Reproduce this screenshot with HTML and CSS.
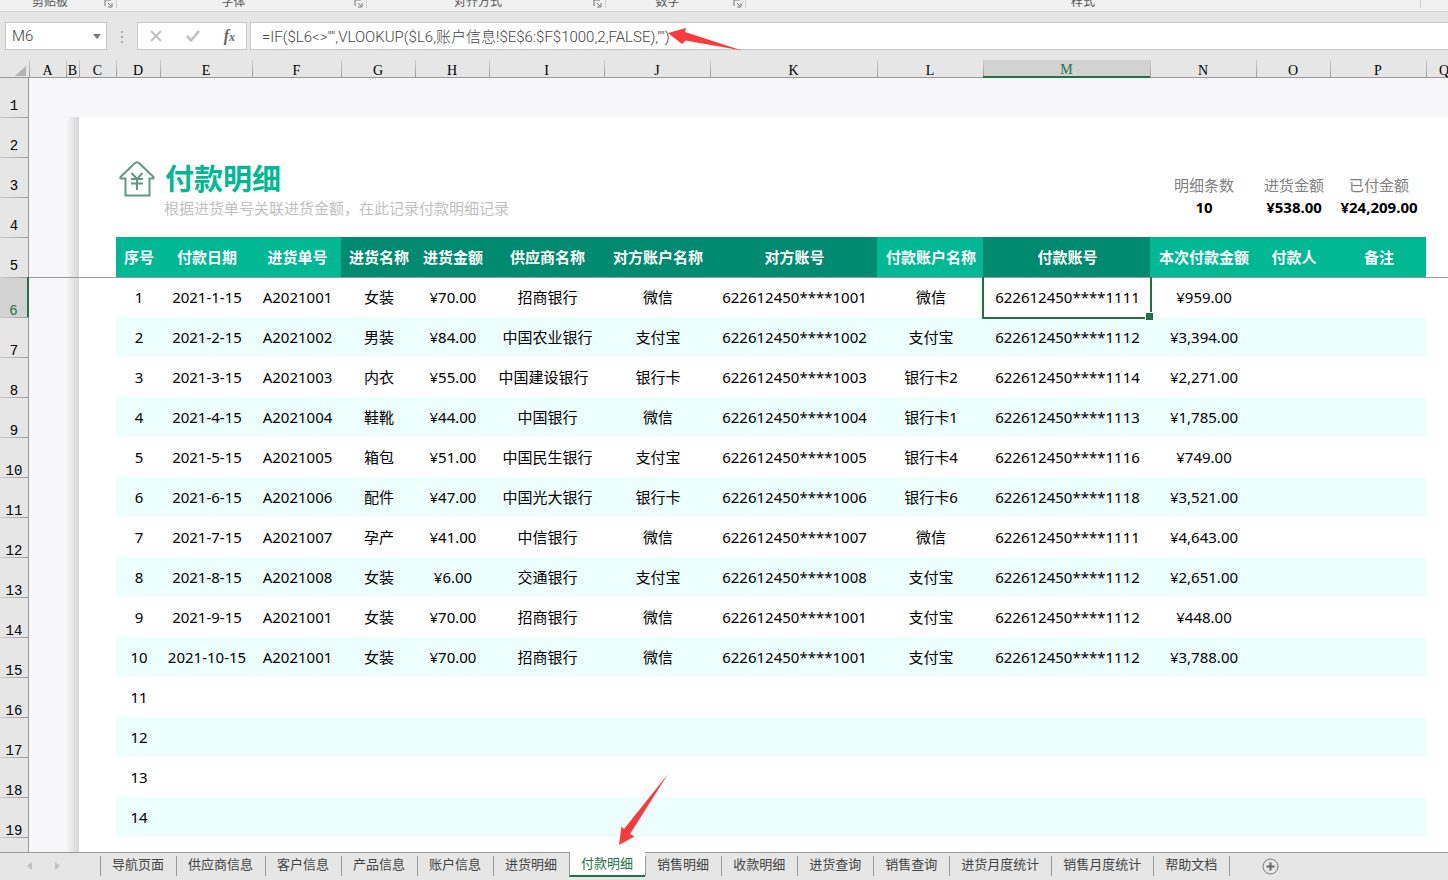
FILE: index.html
```html
<!DOCTYPE html>
<html lang="zh-CN">
<head>
<meta charset="utf-8">
<title>付款明细</title>
<link rel="stylesheet" href="styles.css">
</head>
<body>
<div class="app">
  <header class="ribbon">
    <div class="group g-clip"><span>剪贴板</span><button class="launch" aria-label="剪贴板设置"><svg width="9" height="9" viewBox="0 0 9 9"><path d="M1 7V1h6M4 4l3 3M8 4v4H4"/></svg></button></div>
    <div class="group g-font"><span>字体</span><button class="launch" aria-label="字体设置"><svg width="9" height="9" viewBox="0 0 9 9"><path d="M1 7V1h6M4 4l3 3M8 4v4H4"/></svg></button></div>
    <div class="group g-align"><span>对齐方式</span><button class="launch" aria-label="对齐设置"><svg width="9" height="9" viewBox="0 0 9 9"><path d="M1 7V1h6M4 4l3 3M8 4v4H4"/></svg></button></div>
    <div class="group g-num"><span>数字</span><button class="launch" aria-label="数字格式"><svg width="9" height="9" viewBox="0 0 9 9"><path d="M1 7V1h6M4 4l3 3M8 4v4H4"/></svg></button></div>
    <div class="group g-style"><span>样式</span></div>
  </header>

  <div class="formula-bar">
    <div class="name-box"><input type="text" value="M6" aria-label="名称框"><button aria-label="展开名称"><svg width="8" height="5" viewBox="0 0 8 5"><path d="M0 0h8L4 5z" fill="#777"/></svg></button></div>
    <svg class="dots" width="3" height="12" viewBox="0 0 3 12"><path d="M0 0h2v2H0zM0 5h2v2H0zM0 10h2v2H0z" fill="#ababab"/></svg>
    <div class="fx-tools">
      <button aria-label="取消"><svg width="12" height="12" viewBox="0 0 12 12"><path d="M1 1l10 10M11 1L1 11" stroke="#c0c0c0" stroke-width="2" fill="none"/></svg></button>
      <button aria-label="输入"><svg width="14" height="12" viewBox="0 0 14 12"><path d="M1 6l4 4.500L13 1" stroke="#c0c0c0" stroke-width="2.600" fill="none"/></svg></button>
      <button class="fx" aria-label="插入函数"><i>f<small>x</small></i></button>
    </div>
    <input class="formula" type="text" aria-label="编辑栏" value='=IF($L6&lt;&gt;"",VLOOKUP($L6,账户信息!$E$6:$F$1000,2,FALSE),"")'>
    <svg class="arrow-formula" width="76" height="26" viewBox="0 0 76 26"><path d="M1 7L19 2L18 6L75 24.500L18.500 14.500L15 18z" fill="#fb3b3b"/></svg>
  </div>

  <main class="sheet">
    <table class="grid">
      <colgroup><col class="w-row"><col class="w-a"><col class="w-b"><col class="w-a"><col class="w-d"><col class="w-e"><col class="w-f"><col class="w-g"><col class="w-g"><col class="w-i"><col class="w-j"><col class="w-k"><col class="w-j"><col class="w-k"><col class="w-j"><col class="w-g"><col class="w-p"><col></colgroup>
      <thead>
        <tr class="letters"><th class="corner"><svg width="11" height="10" viewBox="0 0 11 10"><path d="M11 0v10H0z" fill="#b4b4b4"/></svg></th><th>A</th><th>B</th><th>C</th><th>D</th><th>E</th><th>F</th><th>G</th><th>H</th><th>I</th><th>J</th><th>K</th><th>L</th><th class="on">M</th><th>N</th><th>O</th><th>P</th><th class="last">Q</th></tr>
      </thead>
      <tbody class="pane">
        <tr class="first"><th>1</th><td class="out" colspan="17"></td></tr>
        <tr><th>2</th><td class="out"></td><td class="edge"></td><td colspan="15"></td></tr>
        <tr class="bottom"><th>3</th><td class="out"></td><td class="edge"></td><td></td>
          <td class="logo"><svg width="36" height="37" viewBox="0 0 36 37"><path d="M6.500 35.500V18.500H2Q0.500 18 2 16.500L15.500 3.500Q18 1 20.500 3.500L34 16.500Q35.500 18 34 18.500H30.500V35.500Z"/><path d="M12.500 13l5.500 6l5.500-6M12 19h12M12 23.500h12M18 19v11"/></svg></td>
          <td class="title" colspan="9"><h1>付款明细</h1></td><td class="label">明细条数</td><td class="label">进货金额</td><td class="label">已付金额</td><td></td></tr>
        <tr class="top"><th>4</th><td class="out"></td><td class="edge"></td><td></td><td></td><td class="note" colspan="9">根据进货单号关联进货金额，在此记录付款明细记录</td><td class="total">10</td><td class="total">¥538.00</td><td class="total">¥24,209.00</td><td></td></tr>
        <tr class="fields"><th>5</th><td class="out"></td><td class="edge"></td><td></td><td class="h">序号</td><td class="h">付款日期</td><td class="h">进货单号</td><td class="h dark">进货名称</td><td class="h dark">进货金额</td><td class="h dark">供应商名称</td><td class="h dark">对方账户名称</td><td class="h dark">对方账号</td><td class="h">付款账户名称</td><td class="h dark">付款账号</td><td class="h">本次付款金额</td><td class="h">付款人</td><td class="h">备注</td><td></td></tr>
      </tbody>
      <tbody>
        <tr class="frozen"><th class="on">6</th><td class="out"></td><td class="edge"></td><td></td><td>1</td><td>2021-1-15</td><td>A2021001</td><td>女装</td><td>¥70.00</td><td>招商银行</td><td>微信</td><td>622612450****1001</td><td>微信</td><td class="active">622612450****1111<span class="cursor"></span></td><td>¥959.00</td><td></td><td></td><td></td></tr>
        <tr class="alt"><th>7</th><td class="out"></td><td class="edge"></td><td></td><td>2</td><td>2021-2-15</td><td>A2021002</td><td>男装</td><td>¥84.00</td><td>中国农业银行</td><td>支付宝</td><td>622612450****1002</td><td>支付宝</td><td>622612450****1112</td><td>¥3,394.00</td><td></td><td></td><td></td></tr>
        <tr><th>8</th><td class="out"></td><td class="edge"></td><td></td><td>3</td><td>2021-3-15</td><td>A2021003</td><td>内衣</td><td>¥55.00</td><td class="trail">中国建设银行</td><td>银行卡</td><td>622612450****1003</td><td>银行卡2</td><td>622612450****1114</td><td>¥2,271.00</td><td></td><td></td><td></td></tr>
        <tr class="alt"><th>9</th><td class="out"></td><td class="edge"></td><td></td><td>4</td><td>2021-4-15</td><td>A2021004</td><td>鞋靴</td><td>¥44.00</td><td>中国银行</td><td>微信</td><td>622612450****1004</td><td>银行卡1</td><td>622612450****1113</td><td>¥1,785.00</td><td></td><td></td><td></td></tr>
        <tr><th>10</th><td class="out"></td><td class="edge"></td><td></td><td>5</td><td>2021-5-15</td><td>A2021005</td><td>箱包</td><td>¥51.00</td><td>中国民生银行</td><td>支付宝</td><td>622612450****1005</td><td>银行卡4</td><td>622612450****1116</td><td>¥749.00</td><td></td><td></td><td></td></tr>
        <tr class="alt"><th>11</th><td class="out"></td><td class="edge"></td><td></td><td>6</td><td>2021-6-15</td><td>A2021006</td><td>配件</td><td>¥47.00</td><td>中国光大银行</td><td>银行卡</td><td>622612450****1006</td><td>银行卡6</td><td>622612450****1118</td><td>¥3,521.00</td><td></td><td></td><td></td></tr>
        <tr><th>12</th><td class="out"></td><td class="edge"></td><td></td><td>7</td><td>2021-7-15</td><td>A2021007</td><td>孕产</td><td>¥41.00</td><td>中信银行</td><td>微信</td><td>622612450****1007</td><td>微信</td><td>622612450****1111</td><td>¥4,643.00</td><td></td><td></td><td></td></tr>
        <tr class="alt"><th>13</th><td class="out"></td><td class="edge"></td><td></td><td>8</td><td>2021-8-15</td><td>A2021008</td><td>女装</td><td>¥6.00</td><td>交通银行</td><td>支付宝</td><td>622612450****1008</td><td>支付宝</td><td>622612450****1112</td><td>¥2,651.00</td><td></td><td></td><td></td></tr>
        <tr><th>14</th><td class="out"></td><td class="edge"></td><td></td><td>9</td><td>2021-9-15</td><td>A2021001</td><td>女装</td><td>¥70.00</td><td>招商银行</td><td>微信</td><td>622612450****1001</td><td>支付宝</td><td>622612450****1112</td><td>¥448.00</td><td></td><td></td><td></td></tr>
        <tr class="alt"><th>15</th><td class="out"></td><td class="edge"></td><td></td><td>10</td><td>2021-10-15</td><td>A2021001</td><td>女装</td><td>¥70.00</td><td>招商银行</td><td>微信</td><td>622612450****1001</td><td>支付宝</td><td>622612450****1112</td><td>¥3,788.00</td><td></td><td></td><td></td></tr>
        <tr><th>16</th><td class="out"></td><td class="edge"></td><td></td><td>11</td><td colspan="12"></td><td></td></tr>
        <tr class="alt"><th>17</th><td class="out"></td><td class="edge"></td><td></td><td>12</td><td colspan="12"></td><td></td></tr>
        <tr><th>18</th><td class="out"></td><td class="edge"></td><td></td><td>13</td><td colspan="12"></td><td></td></tr>
        <tr class="alt"><th>19</th><td class="out"></td><td class="edge"></td><td></td><td>14</td><td colspan="12"></td><td></td></tr>
        <tr><th></th><td class="out"></td><td class="edge"></td><td colspan="15"></td></tr>
      </tbody>
    </table>
  </main>

  <nav class="tabs">
    <div class="scroll">
      <button aria-label="向左滚动"><svg width="5" height="8" viewBox="0 0 5 8"><path d="M5 0v8L0 4z" fill="#c0c0c0"/></svg></button>
      <button aria-label="向右滚动"><svg width="5" height="8" viewBox="0 0 5 8"><path d="M0 0v8L5 4z" fill="#c0c0c0"/></svg></button>
    </div>
    <button class="tab">导航页面</button><button class="tab">供应商信息</button><button class="tab">客户信息</button><button class="tab">产品信息</button><button class="tab">账户信息</button><button class="tab">进货明细</button><button class="tab current">付款明细</button><button class="tab">销售明细</button><button class="tab">收款明细</button><button class="tab">进货查询</button><button class="tab">销售查询</button><button class="tab">进货月度统计</button><button class="tab">销售月度统计</button><button class="tab">帮助文档</button>
    <button class="add" aria-label="新工作表"><svg width="17" height="17" viewBox="0 0 17 17"><circle cx="8.500" cy="8.500" r="7.500" fill="none" stroke="#777"/><path d="M4.500 8.500h8M8.500 4.500v8" stroke="#666" stroke-width="2"/></svg></button>
    <svg class="arrow-tab" width="52" height="73" viewBox="0 0 52 73"><path d="M1 72L3.500 53.500L6 56L50 1L12 61L16.500 63.500z" fill="#fb3b3b"/></svg>
  </nav>
</div>
</body>
</html>
```

FILE: styles.css
```css
* { box-sizing: border-box; }
body {
  margin: 0;
  font-family: "Noto Sans", "Noto Sans CJK SC", sans-serif;
  font-size: 15px;
  color: #000;
}
button, input { font: inherit; color: inherit; border: 0; padding: 0; background: none; }
svg { display: block; }

.app { display: flex; flex-direction: column; height: 100vh; overflow: hidden; background: #e6e6e6; }

/* ribbon */
.ribbon {
  display: flex;
  flex: none;
  height: 12px;
  overflow: hidden;
  background: #f1f1f1;
  border-bottom: 1px solid #d4d4d4;
}
.group {
  display: flex;
  align-items: flex-end;
  height: 8px;
  padding-right: 3px;
  border-right: 1px solid #d0d0d0;
  font-size: 12px;
  line-height: 12px;
  color: #555;
}
.group span { flex: 1; text-align: center; }
.launch { padding-left: 4px; }
.launch svg { fill: none; stroke: #777; }
.g-clip { width: 117px; }
.g-font { width: 250px; }
.g-align { width: 239px; }
.g-num { width: 140px; }
.g-style { width: 675px; padding: 0; }

/* formula bar */
.formula-bar {
  position: relative;
  display: flex;
  flex: none;
  height: 48px;
  padding: 10px 0 10px 5px;
  font-family: Roboto, "Noto Sans CJK SC", sans-serif;
  color: #444;
}
.name-box, .fx-tools { display: flex; align-items: center; background: #fff; border: 1px solid #c6c6c6; }
.name-box { width: 102px; padding: 0 5px 0 6px; }
.name-box input { flex: 1; min-width: 0; }
.dots { margin: 9px 13px 0 14px; }
.fx-tools { width: 110px; justify-content: space-between; padding: 0 11px 0 12px; }
.fx { font: 16px "Liberation Serif", serif; font-weight: bold; color: #666; }
.fx small { font-size: 12px; }
.formula {
  flex: 1;
  margin-left: 3px;
  padding: 0 0 2px 11px;
  background: #fff;
  border: solid #c6c6c6;
  border-width: 1px 0 1px 1px;
}
.formula, .name-box input { font-weight: 300; }
.arrow-formula { position: absolute; left: 667px; top: 14px; }

/* sheet */
.sheet { flex: 1; min-height: 0; overflow: hidden; background: #fff; }
.grid { width: 100%; table-layout: fixed; border-collapse: separate; border-spacing: 0; }
.w-row { width: 29px; }
.w-a { width: 37px; }
.w-b { width: 13px; }
.w-d { width: 44px; }
.w-e { width: 92px; }
.w-f { width: 89px; }
.w-g { width: 74px; }
.w-i { width: 115px; }
.w-j { width: 106px; }
.w-k { width: 167px; }
.w-p { width: 96px; }
.grid td, .grid th { padding: 0; overflow: visible; white-space: nowrap; }
.grid td { height: 40px; padding-left: 2px; text-align: center; line-height: 20px; }
.grid .first td { height: 39px; }

.grid .letters th {
  height: 18px;
  padding-top: 4px;
  font: 14px/12px "Liberation Serif", serif;
  background: linear-gradient(#d0d0d0, #999) left / 1px 100% no-repeat #e6e6e6;
  border-bottom: 1px solid #999;
}
.grid .letters .corner { background: #e6e6e6; padding: 4px 0 0 15px; }
.grid .letters .last { padding-left: 13px; text-align: left; }
.grid .letters .on { color: #217346; background-color: #d2d2d2; border-bottom: 2px solid #217346; }
tbody th {
  vertical-align: bottom;
  font: 14px/12px "Liberation Mono", monospace;
  background: linear-gradient(90deg, #ccc, #999) top / 100% 1px no-repeat #e6e6e6;
  border-right: 1px solid #999;
}
.grid .pane th { padding-bottom: 5px; }
.first th { background: #e6e6e6; }
tbody .on { color: #217346; background-color: #d2d2d2; border-right: 2px solid #217346; }

.grid .out { background: #f7f7f9; }
.edge { background: linear-gradient(90deg, #f7f7f9, #d6d6d6); }
.bottom td { vertical-align: bottom; }
.top td { vertical-align: top; }
.logo svg { margin-left: 1px; fill: none; stroke: #5f9a89; stroke-width: 2; }
.grid .title { padding-left: 5px; text-align: left; }
h1 { margin: 0; font-size: 29px; line-height: 36px; color: #00b894; }
.grid .note { padding-left: 4px; text-align: left; line-height: 22px; color: #bfbfbf; }
.grid .label { padding-bottom: 2px; color: #808080; }
.total { font-weight: bold; }
.h { font-weight: bold; color: #fff; background: #00b894; }
.dark { background: #008b70; }
.grid .frozen td { padding-bottom: 1px; border-top: 1px solid #999; }
.alt td:nth-child(n+5):not(:last-child) { background: #edfffc; }
.grid .trail { padding-right: 8px; }

.active { position: relative; }
.cursor { position: absolute; inset: -1px -2px -2px -1px; border: 2px solid #217346; border-top: 0; }
.cursor::after {
  content: "";
  position: absolute;
  right: -4px;
  bottom: -4px;
  width: 7px;
  height: 7px;
  background: #217346;
  border: 1px solid #fff;
}

/* sheet tabs */
.tabs {
  position: relative;
  display: flex;
  flex: none;
  height: 28px;
  border-top: 1px solid #999;
  font-size: 13px;
  color: #444;
}
.scroll { display: flex; width: 100px; gap: 23px; padding-left: 27px; height: 26px; }
.tab {
  height: 20px;
  margin-top: 3px;
  padding: 0 12px 4px 11px;
  line-height: 16px;
  border-left: 1px solid #999;
  white-space: nowrap;
}
.tab.current {
  height: 25px;
  margin-top: -1px;
  padding-bottom: 1px;
  color: #217346;
  background: #fff;
  border-bottom: 2px solid #217346;
}
.add { height: 26px; margin-left: 32px; }
.tab:nth-last-child(3) { border-right: 1px solid #999; }
.arrow-tab { position: absolute; left: 618px; bottom: 34px; }
```
